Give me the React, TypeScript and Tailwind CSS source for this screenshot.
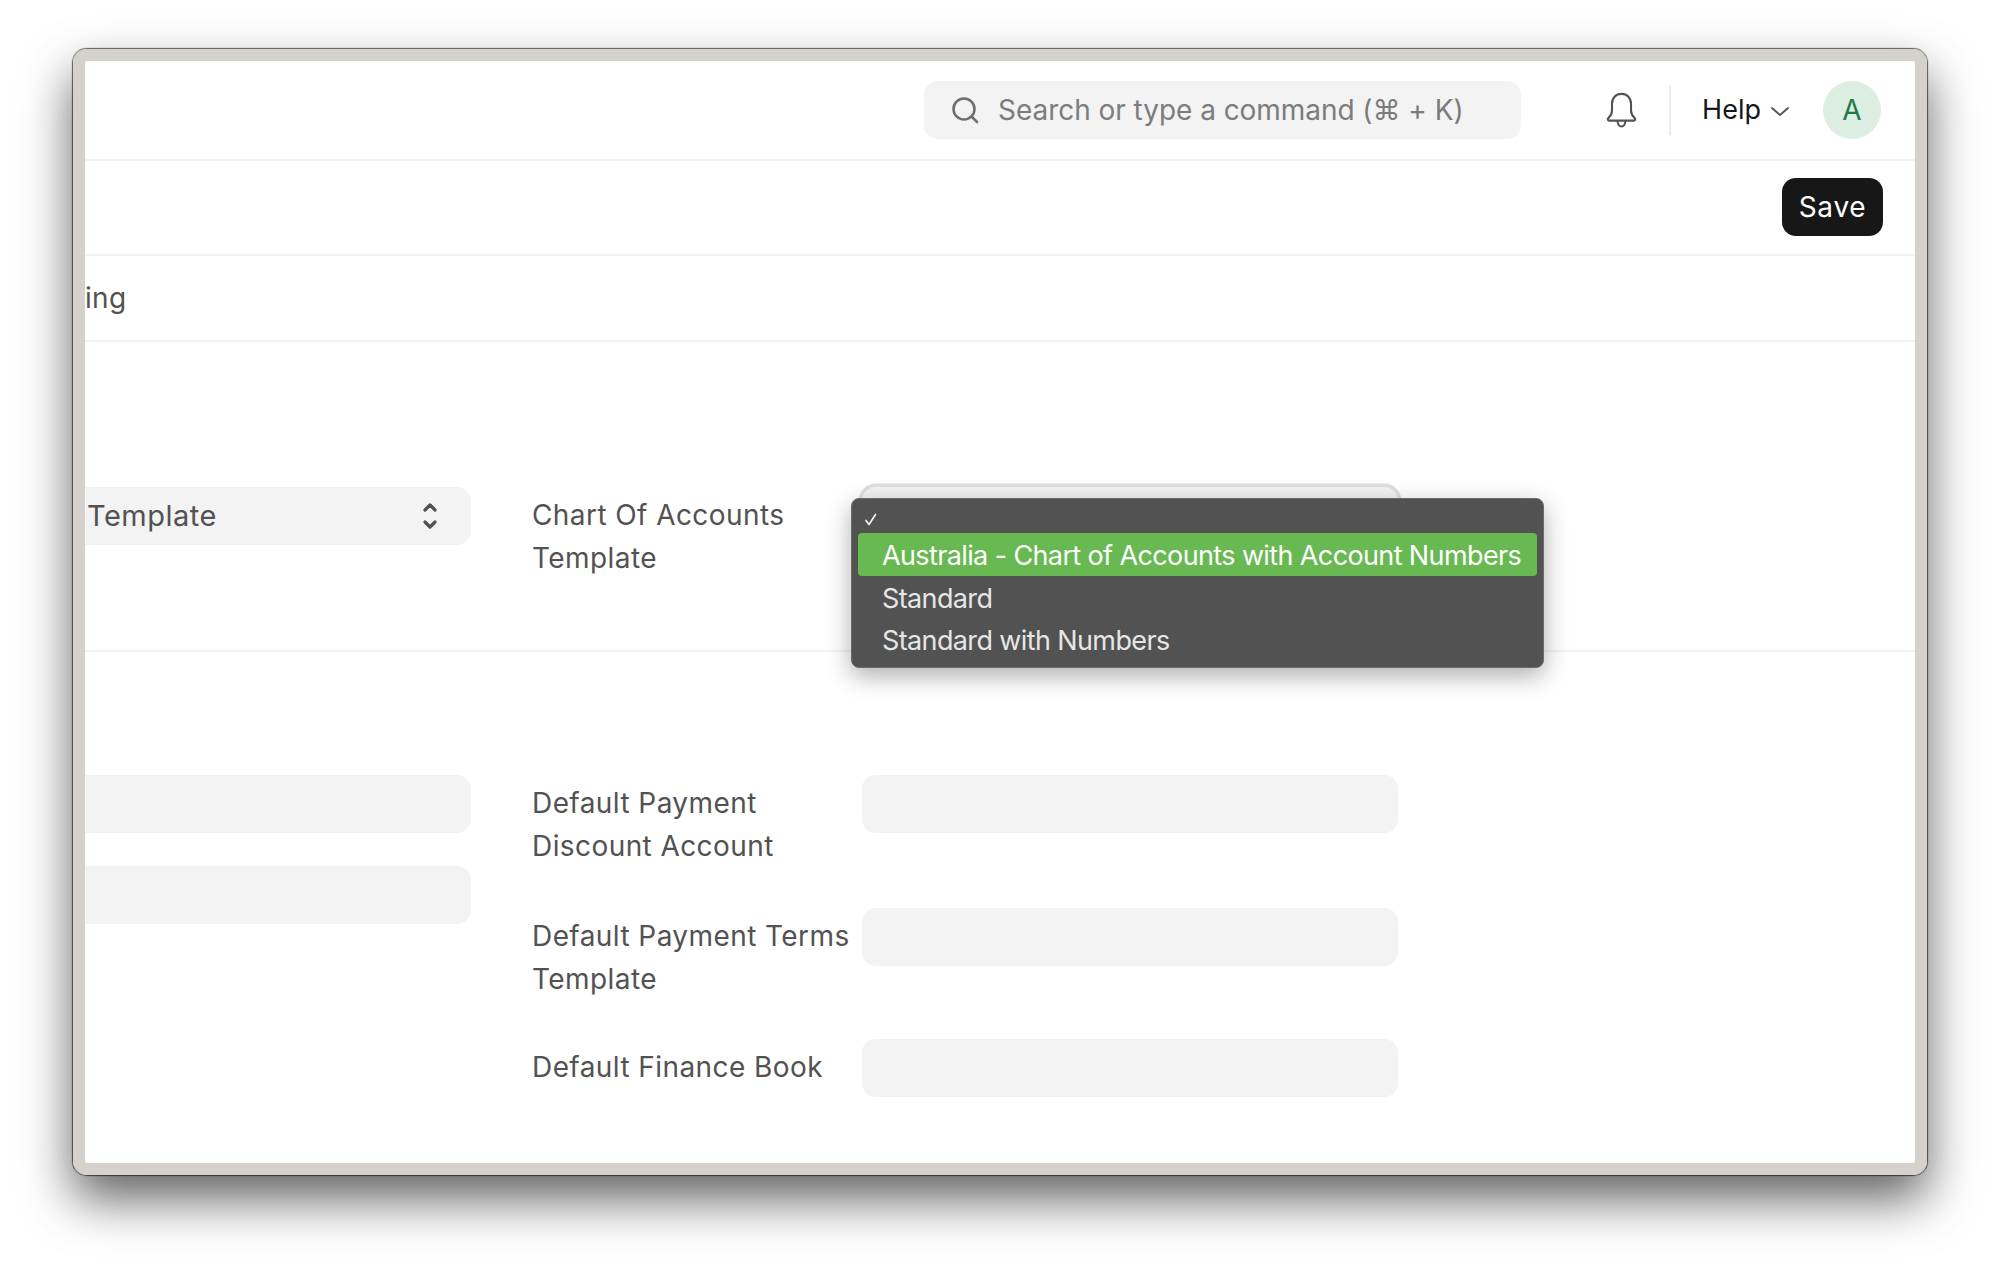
import React from "react";

function Field({ className = "" }: { className?: string }) {
  return <div className={`h-[58px] w-[536px] rounded-[14px] bg-[#f3f3f3] ${className}`} />;
}

function LeftField({ children }: { children?: React.ReactNode }) {
  return (
    <div className="flex h-[58px] w-[386px] items-center justify-between rounded-r-[14px] bg-[#f3f3f3] pl-[2px] pr-[33px] text-[29px] tracking-[0.5px] text-[#525252]">
      {children}
    </div>
  );
}

function Label({ lines }: { lines: string[] }) {
  return (
    <div className="w-[330px] shrink-0 pt-[7px] text-[28px] leading-[43px] tracking-[0.42px] text-[#525252]">
      {lines.map((l) => (
        <div key={l} className="whitespace-nowrap">{l}</div>
      ))}
    </div>
  );
}

function Row({ lines, className = "" }: { lines: string[]; className?: string }) {
  return (
    <div className={`flex items-start ${className}`}>
      <Label lines={lines} />
      <Field />
    </div>
  );
}

export default function App() {
  return (
    <div className="h-[1271px] w-[1999px] overflow-hidden bg-white pl-[73px] pt-[49px] font-['Inter',sans-serif]">
      <div className="h-[1126px] w-[1854px] rounded-[14px] border-[12px] border-[#d5d2cd] shadow-[0_0_1px_1px_rgba(0,0,0,0.6),0_24px_50px_rgba(0,0,0,0.62)]">
        <div className="flex h-full flex-col overflow-hidden rounded-[8px] bg-white">
          <header className="flex h-[100px] shrink-0 items-center justify-end border-b-2 border-[#f1f1f1] pr-[34px]">
            <div className="flex h-[58px] w-[597px] items-center gap-[19px] rounded-[14px] bg-[#f3f3f3] pl-[27px] text-[#7c7c7c]">
              <svg width="28" height="28" viewBox="0 0 28 28" fill="none" stroke="#6f6f6f" strokeWidth="2.6" strokeLinecap="round">
                <circle cx="13" cy="13" r="10.5" />
                <path d="M21 21l5 5" />
              </svg>
              <span className="whitespace-nowrap text-[28px] tracking-[-0.05px]">Search or type a command (⌘ + K)</span>
            </div>
            <svg className="ml-[85px]" width="31" height="37" viewBox="0 0 28 33" fill="none" stroke="#525252" strokeWidth="1.900" strokeLinejoin="round" strokeLinecap="round">
              <path d="M14 1.500c-5.200 0-8.600 3.700-8.600 9v6.200c0 3-1.400 4.800-3.400 6.800-.8.800-.4 2.100.9 2.100h22.200c1.300 0 1.700-1.300.9-2.100-2-2-3.400-3.800-3.400-6.800v-6.200c0-5.300-3.400-9-8.600-9z" />
              <path d="M10.500 26c0 2.800 1.500 5 3.500 5s3.500-2.200 3.500-5" />
            </svg>
            <div className="ml-[32px] h-[49px] w-[2px] bg-[#ececec]" />
            <span className="ml-[31px] text-[27px] text-[#171717]">Help</span>
            <svg className="ml-[9px] mt-[3px]" width="20" height="11" viewBox="0 0 20 11" fill="none" stroke="#525252" strokeWidth="1.800" strokeLinecap="round" strokeLinejoin="round">
              <path d="M2 2l8 7 8-7" />
            </svg>
            <div className="ml-[33px] flex h-[58px] w-[58px] items-center justify-center rounded-full bg-[#dbeee1] text-[28px] text-[#1f7a48]">A</div>
          </header>

          <div className="flex h-[95px] shrink-0 items-center justify-end border-b-2 border-[#f1f1f1] pb-[1px] pr-[32px]">
            <button className="flex h-[58px] w-[101px] items-center justify-center rounded-[14px] bg-[#171717] text-[28px] tracking-[0.7px] text-white">Save</button>
          </div>

          <div className="flex h-[86px] shrink-0 items-center border-b-2 border-[#f1f1f1] text-[28px] tracking-[0.3px] text-[#525252]">ing</div>

          <section className="flex h-[310px] shrink-0 items-start border-b-2 border-[#f1f1f1] pt-[145px]">
            <LeftField>
              <span>Template</span>
              <svg width="16" height="28" viewBox="0 0 16 28" fill="none" stroke="#525252" strokeWidth="3.200" strokeLinecap="round" strokeLinejoin="round">
                <path d="M3 8l5-5 5 5" />
                <path d="M3 20l5 5 5-5" />
              </svg>
            </LeftField>
            <div className="ml-[61px] flex items-start">
              <Label lines={["Chart Of Accounts", "Template"]} />
              <div className="relative">
                <div className="h-[58px] w-[536px] rounded-[14px] bg-[#f3f3f3] shadow-[0_0_0_3.500px_#dfdfdf]" />
                <div className="absolute left-[-11px] top-[11px] flex h-[170px] w-[693px] flex-col rounded-[8px] border border-[#6b6b6b] bg-[#525252] px-[6px] py-[5px] text-[27px] tracking-[-0.62px] text-[#e6e6e6] shadow-[0_8px_24px_rgba(0,0,0,0.32)]">
                  <div className="flex h-[29px] shrink-0 items-end pb-[7px] pl-[6px]">
                    <svg width="14" height="13" viewBox="0 0 14 13" fill="none" stroke="#f0f0f0" strokeWidth="1.700" strokeLinecap="round" strokeLinejoin="round">
                      <path d="M2 7.500l3 4 6.500-10" />
                    </svg>
                  </div>
                  <div className="flex h-[43px] shrink-0 items-center whitespace-nowrap rounded-[4px] bg-[#68b952] pl-[24px] pt-[3px] text-white">Australia - Chart of Accounts with Account Numbers</div>
                  <div className="flex h-[43px] shrink-0 items-center pl-[24px] pt-[3px]">Standard</div>
                  <div className="flex h-[43px] shrink-0 items-center pl-[24px] pt-[2px]">Standard with Numbers</div>
                </div>
              </div>
            </div>
          </section>

          <section className="flex items-start pt-[123px]">
            <div className="flex flex-col gap-[33px]">
              <LeftField />
              <LeftField />
            </div>
            <div className="ml-[61px] flex flex-col gap-[33px]">
              <Row className="h-[100px]" lines={["Default Payment", "Discount Account"]} />
              <Row className="h-[98px]" lines={["Default Payment Terms", "Template"]} />
              <Row className="h-[58px]" lines={["Default Finance Book"]} />
            </div>
          </section>
        </div>
      </div>
    </div>
  );
}
